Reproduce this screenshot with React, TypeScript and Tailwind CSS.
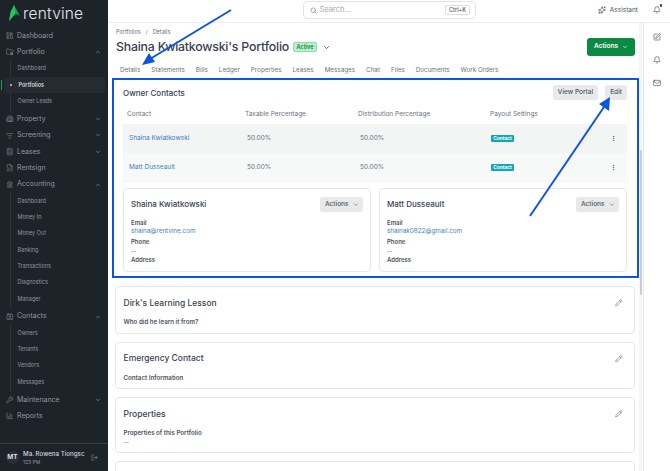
import {
  Bell,
  Building2,
  Calculator,
  ChartColumn,
  ChevronDown,
  ChevronUp,
  Contact,
  EllipsisVertical,
  FilePen,
  FolderCog,
  LayoutDashboard,
  ListFilter,
  LogOut,
  Mail,
  Pencil,
  Search,
  Sparkles,
  SquarePen,
  Wrench,
  Landmark,
} from "lucide-react";

type NavItem = {
  label: string;
  icon: React.ComponentType<{ className?: string; strokeWidth?: number }>;
  chevron?: "up" | "down";
  children?: string[];
};

const navItems: NavItem[] = [
  { label: "Dashboard", icon: LayoutDashboard },
  { label: "Portfolio", icon: FolderCog, chevron: "up", children: ["Dashboard", "Portfolios", "Owner Leads"] },
  { label: "Property", icon: Building2, chevron: "down" },
  { label: "Screening", icon: ListFilter, chevron: "down" },
  { label: "Leases", icon: Calculator, chevron: "down" },
  { label: "Rentsign", icon: FilePen },
  {
    label: "Accounting",
    icon: Landmark,
    chevron: "up",
    children: ["Dashboard", "Money In", "Money Out", "Banking", "Transactions", "Diagnostics", "Manager"],
  },
  { label: "Contacts", icon: Contact, chevron: "up", children: ["Owners", "Tenants", "Vendors", "Messages"] },
  { label: "Maintenance", icon: Wrench, chevron: "down" },
  { label: "Reports", icon: ChartColumn },
];

const tabs = ["Details", "Statements", "Bills", "Ledger", "Properties", "Leases", "Messages", "Chat", "Files", "Documents", "Work Orders"];

const Sidebar = () => (
  <aside className="relative w-[108px] shrink-0 h-full bg-[#1e2329] flex flex-col text-[#8c96a1]">
    <div className="h-[27px] pl-[8px] flex items-center gap-[3px] shrink-0">
      <svg width="12" height="17" viewBox="0 0 12 17">
        <path d="M6 0 L12 11 L7.5 8.5 L1 16 Z" fill="#16a34a" />
        <path d="M6 0 L7.5 8.5 L1 16 L2.5 7 Z" fill="#22c55e" />
      </svg>
      <span className="text-[#e5e7eb] text-[15.5px] font-light leading-none tracking-[0.2px]">rentvine</span>
    </div>
    <nav className="flex-1 pt-[0.6px] flex flex-col">
      {navItems.map((item) => (
        <div key={item.label}>
          <div className="h-[16.4px] pl-[6px] pr-[4px] flex items-center text-[7px]">
            <item.icon className="w-[7.5px] h-[7.5px] mr-[3.5px]" strokeWidth={1.6} />
            <span className="flex-1">{item.label}</span>
            {item.chevron === "up" && <ChevronUp className="w-[6px] h-[6px] mr-[3px]" strokeWidth={2.5} />}
            {item.chevron === "down" && <ChevronDown className="w-[6px] h-[6px] mr-[3px]" strokeWidth={2.5} />}
          </div>
          {item.children && (
            <div className="ml-[10px] border-l border-[#2e343b] pb-[1.6px]">
              {item.children.map((child) =>
                child === "Portfolios" ? (
                  <div
                    key={child}
                    className="relative -ml-[7px] w-[101px] h-[16.3px] flex items-center pl-[6px] bg-[#262b31] rounded-[3px] text-[5.5px] font-semibold text-[#d1d5db]"
                  >
                    <span className="absolute -left-[3px] top-[3px] w-[1px] h-[10px] bg-[#16a34a]" />
                    <span className="w-[2px] h-[2px] rounded-full bg-[#d1d5db] mr-[6.5px]" />
                    {child}
                  </div>
                ) : (
                  <div key={child} className="h-[16.3px] flex items-center pl-[6.5px] text-[5.5px]">
                    {child}
                  </div>
                )
              )}
            </div>
          )}
        </div>
      ))}
    </nav>
    <div className="h-[28px] shrink-0 border-t border-[#3a4047] flex items-center pl-[6px] pr-[10px] gap-[4px]">
      <div className="w-[13px] h-[13px] rounded-full bg-[#2a3036] text-[#e5e7eb] text-[6.5px] font-semibold flex items-center justify-center">MT</div>
      <div className="flex-1 min-w-0 leading-none pt-[1px]">
        <div className="text-[6.2px] text-[#d1d5db] font-medium whitespace-nowrap">Ma. Rowena Tiongsc</div>
        <div className="text-[5px] mt-[2.5px]">123 PM</div>
      </div>
      <LogOut className="w-[7px] h-[7px]" />
    </div>
  </aside>
);

const Header = () => (
  <header className="h-[23px] shrink-0 bg-white border-b border-[#ececec] flex items-start text-[#4b5563]">
    <div className="ml-[195px] mt-[1px] w-[173px] h-[18px] border border-[#e2e4e6] rounded-[4px] flex items-center pl-[6px] pr-[5px]">
      <Search className="w-[7px] h-[7px] text-[#6b7280]" />
      <span className="ml-[2.5px] flex-1 text-[7.5px] text-[#a3a8af]">Search...</span>
      <span className="border border-[#dcdfe2] rounded-[2px] px-[3px] h-[10px] flex items-center text-[5.5px] font-medium">Ctrl+K</span>
    </div>
    <div className="ml-auto mt-[6px] mr-[9px] flex items-center">
      <Sparkles className="w-[8px] h-[8px] mr-[4px]" />
      <span className="text-[6.5px] leading-[8px]">Assistant</span>
      <div className="relative ml-[15px]">
        <Bell className="w-[8px] h-[8px]" />
        <span className="absolute -top-[2px] -right-[1px] w-[2.5px] h-[2.5px] rounded-full bg-[#7f1d1d]" />
      </div>
    </div>
  </header>
);

const Btn = ({ children }: { children: React.ReactNode }) => (
  <button className="h-[15px] px-[5px] bg-[#e7e9ea] rounded-[3px] text-[6.5px] font-medium text-[#4b5563] flex items-center">{children}</button>
);

const ActionsBtn = () => (
  <button className="h-[15px] w-[43px] bg-[#e7e9ea] rounded-[3px] text-[6.5px] font-medium text-[#4b5563] flex items-center justify-center gap-[4px]">
    Actions
    <ChevronDown className="w-[5.5px] h-[5.5px]" strokeWidth={2.5} />
  </button>
);

const ContactRow = ({ name, bg }: { name: string; bg: string }) => (
  <div className={`h-[29.3px] flex items-center text-[6.5px] ${bg}`}>
    <span className="w-[124px] pl-[6px] text-[#3b7cc4]">{name}</span>
    <span className="w-[113px] text-[#6b7280]">50.00%</span>
    <span className="w-[131px] text-[#6b7280]">50.00%</span>
    <span className="w-[118.5px] flex items-center">
      <span className="h-[7px] w-[23px] flex items-center justify-center bg-[#13a5b8] rounded-[1px] text-white text-[4.8px] font-bold">Contact</span>
    </span>
    <EllipsisVertical className="w-[7px] h-[7px] text-[#4b5563]" />
  </div>
);

const ContactCard = ({ name, email }: { name: string; email: string }) => (
  <div className="flex-1 h-[84px] border border-[#e6e8ea] rounded-[4px] pl-[7px] pr-[7px] pt-[8px]">
    <div className="flex items-center justify-between h-[15px]">
      <span className="text-[8px] font-medium text-[#374151]">{name}</span>
      <ActionsBtn />
    </div>
    <div className="mt-[6px] text-[6px] leading-[9.3px]">
      <div className="font-semibold text-[#4b5563]">Email</div>
      <div className="text-[#3b82c4] text-[6.3px]">{email}</div>
      <div className="font-semibold text-[#4b5563]">Phone</div>
      <div className="text-[#6b7280]">--</div>
      <div className="font-semibold text-[#4b5563]">Address</div>
    </div>
  </div>
);

const InfoCard = ({ title, label, value, h }: { title?: string; label?: string; value?: string; h: string }) => (
  <div className={`ml-[7px] mr-[8px] mb-[8px] ${h} border border-[#e6e8ea] rounded-[4px] pl-[7.5px] pr-[12px] pt-[10px] shrink-0`}>
    {title && (
      <>
        <div className="flex items-center justify-between h-[12px]">
          <span className="text-[8.5px] font-medium text-[#374151]">{title}</span>
          <Pencil className="w-[7.5px] h-[7.5px] text-[#6b7280]" />
        </div>
        <div className="mt-[8px] text-[6.2px] font-semibold text-[#4b5563] leading-[9px]">{label}</div>
        {value && <div className="text-[6px] text-[#6b7280] leading-[9px]">{value}</div>}
      </>
    )}
  </div>
);

const Main = () => (
  <main className="flex-1 min-w-0 flex flex-col overflow-hidden bg-white">
    <div className="pl-[8px] pr-[8px] pt-[5px]">
      <div className="text-[5.5px] text-[#6b7280] h-[8px] leading-[8px] flex gap-[5px]">
        <span>Portfolios</span>
        <span>/</span>
        <span>Details</span>
      </div>
      <div className="flex items-center h-[22px]">
        <span className="text-[12.3px] font-medium text-[#374151] tracking-[-0.2px]">Shaina Kwiatkowski's Portfolio</span>
        <span className="ml-[4px] h-[10px] px-[2.5px] bg-[#b9f0cc] border border-[#86e0a8] rounded-[2px] text-[5.5px] font-semibold text-[#15803d] flex items-center">Active</span>
        <ChevronDown className="ml-[5px] w-[9px] h-[9px] text-[#374151]" />
        <button className="ml-auto h-[18px] w-[48px] bg-[#0b8a44] rounded-[3px] text-white text-[6.5px] font-semibold flex items-center justify-center gap-[4px]">
          Actions
          <ChevronDown className="w-[6px] h-[6px]" strokeWidth={2.5} />
        </button>
      </div>
      <div className="flex gap-[11px] pl-[4px] h-[14px] mt-[6px] items-center text-[6.3px] text-[#6b7280]">
        {tabs.map((tab) => (
          <span key={tab}>{tab}</span>
        ))}
      </div>
    </div>
    <section className="mx-[4px] h-[200px] shrink-0 w-[527px] border-2 border-[#0b55e0] pl-[9px] pr-[10px] pt-[5px]">
      <div className="flex items-center h-[15px]">
        <span className="text-[8px] font-medium text-[#374151]">Owner Contacts</span>
        <div className="ml-auto flex gap-[7px]">
          <Btn>View Portal</Btn>
          <Btn>Edit</Btn>
        </div>
      </div>
      <div className="h-[24px] pt-[6px] flex items-center text-[6.5px] text-[#6b7280] pl-[4px]">
        <span className="w-[118px]">Contact</span>
        <span className="w-[113px]">Taxable Percentage</span>
        <span className="w-[132px]">Distribution Percentage</span>
        <span>Payout Settings</span>
      </div>
      <ContactRow name="Shaina Kwiatkowski" bg="bg-[#f3f4f4]" />
      <ContactRow name="Matt Dusseault" bg="bg-[#f7f8f8]" />
      <div className="flex gap-[8px] mt-[5.4px]">
        <ContactCard name="Shaina Kwiatkowski" email="shaina@rentvine.com" />
        <ContactCard name="Matt Dusseault" email="shainak0822@gmail.com" />
      </div>
    </section>
    <div className="mt-[8px] flex flex-col">
      <InfoCard title="Dirk's Learning Lesson" label="Who did he learn it from?" h="h-[47.6px]" />
      <InfoCard title="Emergency Contact" label="Contact Information" h="h-[47.6px]" />
      <InfoCard title="Properties" label="Properties of this Portfolio" value="--" h="h-[56px]" />
      <InfoCard h="h-[40px]" />
    </div>
  </main>
);

const Rail = () => (
  <div className="w-[27px] shrink-0 h-full border-l border-[#e3e5e7] bg-white flex flex-col items-center gap-[15px] pt-[10px] text-[#4b5563]">
    <SquarePen className="w-[8px] h-[8px]" />
    <Bell className="w-[8px] h-[8px]" />
    <Mail className="w-[8px] h-[8px]" />
  </div>
);

const Arrows = () => (
  <svg className="absolute inset-0 pointer-events-none" width="670" height="471" viewBox="0 0 670 471">
    <line x1="231" y1="10" x2="150" y2="59" stroke="#0b55e0" strokeWidth="2" />
    <polygon points="142,65 149,53 155,62" fill="#0b55e0" />
    <line x1="530" y1="216" x2="604" y2="107" stroke="#0b55e0" strokeWidth="2" />
    <polygon points="610,97 609,111 599,104" fill="#0b55e0" />
  </svg>
);

export default function App() {
  return (
    <div className="relative w-[670px] h-[471px] overflow-hidden flex bg-white font-['Inter',sans-serif]">
      <Sidebar />
      <div className="flex-1 min-w-0 flex flex-col">
        <Header />
        <div className="flex-1 min-h-0 flex">
          <Main />
          <Rail />
        </div>
      </div>
      <div className="absolute left-[639px] top-[23px] w-[3px] h-[448px] bg-[#f4f5f6]">
        <div className="ml-[0.5px] mt-[127px] w-[2px] h-[145px] bg-[#c9cdd2] rounded-full" />
      </div>
      <Arrows />
    </div>
  );
}
